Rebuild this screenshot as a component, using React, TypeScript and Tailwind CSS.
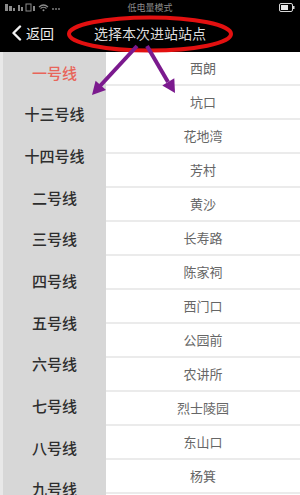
import React from "react";

const lines = ["一号线", "十三号线", "十四号线", "二号线", "三号线", "四号线", "五号线", "六号线", "七号线", "八号线", "九号线"];
const stations = ["西朗", "坑口", "花地湾", "芳村", "黄沙", "长寿路", "陈家祠", "西门口", "公园前", "农讲所", "烈士陵园", "东山口", "杨箕"];

const StatusBar = () => (
  <div className="h-[14px] bg-black flex items-center justify-between px-[5px] relative">
    <svg width="58" height="9" viewBox="0 0 58 9" className="text-[#8a8a8a]">
      <rect x="0" y="1" width="3" height="7" fill="currentColor" />
      <rect x="4" y="3" width="3" height="5" fill="currentColor" />
      <rect x="8" y="5" width="2" height="3" fill="currentColor" />
      <rect x="13" y="2" width="2" height="6" fill="currentColor" />
      <rect x="16" y="4" width="2" height="4" fill="currentColor" />
      <rect x="21" y="1" width="5" height="7" fill="none" stroke="currentColor" strokeWidth="1" />
      <rect x="28" y="3" width="2" height="5" fill="currentColor" />
      <path d="M34 4 Q38.5 0 43 4 M35.5 5.5 Q38.5 3 41.5 5.5" fill="none" stroke="currentColor" strokeWidth="1.2" />
      <circle cx="38.5" cy="7.3" r="1" fill="currentColor" />
      <circle cx="48" cy="6" r="0.9" fill="currentColor" />
      <circle cx="51" cy="6" r="0.9" fill="currentColor" />
      <circle cx="54" cy="6" r="0.9" fill="currentColor" />
    </svg>
    <span className="absolute left-0 right-0 text-center text-[9px] leading-none text-[#8c8c8c] pointer-events-none">低电量模式</span>
    <svg width="16" height="9" viewBox="0 0 16 9">
      <rect x="0.5" y="0.5" width="13" height="8" rx="1.5" fill="none" stroke="#d8d8d8" strokeWidth="1" />
      <rect x="2" y="2" width="7" height="5" fill="#e6e6e6" />
      <rect x="14" y="3" width="1.5" height="3" fill="#d8d8d8" />
    </svg>
  </div>
);

const NavBar = () => (
  <div className="h-[38px] bg-black flex items-center relative">
    <div className="flex items-center pl-[11px] gap-[4px] text-white">
      <svg width="11" height="16" viewBox="0 0 11 16">
        <path d="M9 1.5 L2.5 8 L9 14.5" fill="none" stroke="#f2f2f2" strokeWidth="2.4" strokeLinecap="round" strokeLinejoin="round" />
      </svg>
      <span className="text-[14px] leading-none text-[#eeeeee]">返回</span>
    </div>
    <span className="absolute left-0 right-0 text-center text-[14px] leading-none text-[#dcdcdc] pointer-events-none">
      选择本次进站站点
    </span>
  </div>
);

export default function App() {
  return (
    <div
      className="w-[300px] h-[495px] overflow-hidden bg-white relative"
      style={{ fontFamily: '"Noto Sans CJK SC", "Noto Sans", sans-serif' }}
    >
      <StatusBar />
      <NavBar />
      <div className="flex">
        <div className="w-[106px] shrink-0 bg-[#e8e8e8] pl-[3px]">
          <div className="bg-[#d7d7d7] flex flex-col">
            {lines.map((l, i) => (
              <div
                key={l}
                className={`h-[41.7px] flex items-center justify-center text-[15px] font-medium ${
                  i === 0 ? "text-[#e8655a]" : "text-[#2e2e2e]"
                }`}
              >
                {l}
              </div>
            ))}
          </div>
        </div>
        <div className="flex-1 flex flex-col bg-white">
          {stations.map((s) => (
            <div
              key={s}
              className="h-[34px] shrink-0 flex items-center justify-center border-b-2 border-[#ebebeb] text-[13px] text-[#666666]"
            >
              {s}
            </div>
          ))}
        </div>
      </div>

      {/* annotation overlay */}
      <svg className="absolute inset-0 pointer-events-none" width="300" height="495" viewBox="0 0 300 495">
        <ellipse cx="150" cy="34" rx="81" ry="16.5" fill="none" stroke="#e31010" strokeWidth="4" />
        <line x1="137" y1="46" x2="100" y2="86" stroke="#7b1a8e" strokeWidth="4" />
        <polygon points="92,95 106,90 95.6,80.7" fill="#7b1a8e" />
        <line x1="147" y1="46" x2="168" y2="82" stroke="#7b1a8e" strokeWidth="4" />
        <polygon points="175,93 174.3,78.2 162.3,85.4" fill="#7b1a8e" />
      </svg>
    </div>
  );
}
